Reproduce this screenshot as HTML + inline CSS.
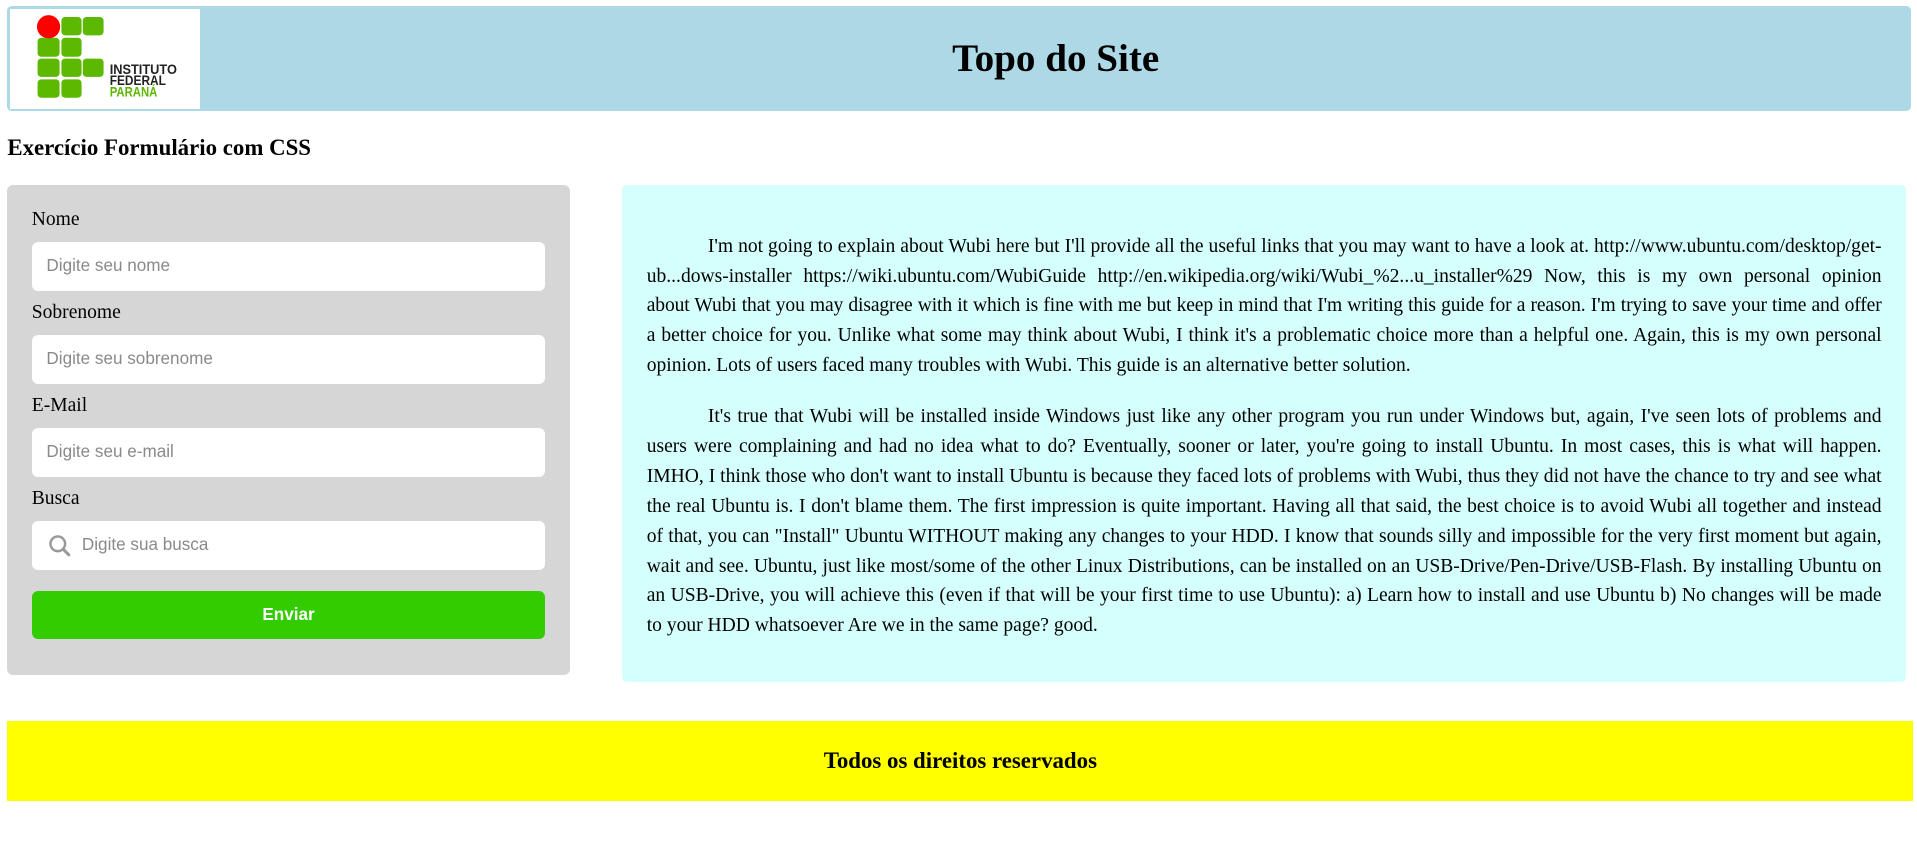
<!DOCTYPE html>
<html><head><meta charset="utf-8">
<style>
html,body{margin:0;padding:0;background:#fff;}
body{zoom:1.2226;width:1568px;height:694px;overflow:hidden;font-family:"Liberation Serif",serif;color:#000;position:relative;}
.header{position:absolute;left:6px;top:5px;width:1557px;height:86px;background:#add8e6;border-radius:4px;}
.logo{position:absolute;left:2px;top:2px;width:156px;height:82px;background:#fff;}
.svg{position:absolute;left:0;top:0;}
.header h1{margin:0;position:absolute;left:158px;right:0;top:24px;text-align:center;font-size:32px;font-weight:bold;line-height:40px;}
h3{position:absolute;left:6px;top:108px;margin:0;font-size:18.7px;line-height:26px;}
.form{position:absolute;left:6px;top:151px;width:460px;height:401px;background:#d6d6d6;border-radius:5px;}
.lbl{position:absolute;left:20px;font-size:16px;line-height:20px;}
.in{position:absolute;left:20px;width:420px;height:40px;background:#fff;border-radius:5px;font-family:"Liberation Sans",Arial,sans-serif;font-size:14px;color:#8a8a8a;line-height:40px;box-sizing:border-box;padding-left:12px;}
.btn{position:absolute;left:20px;top:332px;width:420px;height:40px;background:#33cc00;border-radius:5px;color:#fff;font-family:"Liberation Sans",Arial,sans-serif;font-size:14px;font-weight:bold;text-align:center;line-height:40px;}
.text{position:absolute;left:509px;top:151px;width:1050px;height:407px;background:#d4fffc;border-radius:4px;box-sizing:border-box;padding:21px 20px;}
.p{margin:17.6px 0;font-size:16px;line-height:24.4px;}
.p .ln{display:block;text-align:justify;text-align-last:justify;white-space:nowrap;}
.p .ln.l{text-align-last:left;}
.p .ln.i{padding-left:50px;}
.p .ln.t{letter-spacing:-0.1px;}
.footer{position:absolute;left:6px;top:590px;width:1559px;height:65px;background:#ffff00;text-align:center;font-weight:bold;font-size:18.7px;line-height:65px;}
</style></head><body>
<div class="header">
  <div class="logo"></div>
  <svg class="svg" width="160" height="86" viewBox="0 0 160 86">
    <g fill="#5cb800">
      <rect x="44.5" y="9" width="16.5" height="15" rx="3"/>
      <rect x="62" y="9" width="17" height="15" rx="3"/>
      <rect x="25" y="26" width="18" height="15.5" rx="3"/>
      <rect x="44.5" y="26" width="16.5" height="15.5" rx="3"/>
      <rect x="25" y="43" width="18" height="15" rx="3"/>
      <rect x="44.5" y="43" width="16.5" height="15" rx="3"/>
      <rect x="62" y="43" width="17" height="15" rx="3"/>
      <rect x="25" y="60" width="18" height="15" rx="3"/>
      <rect x="44.5" y="60" width="16.5" height="15" rx="3"/>
    </g>
    <circle cx="34" cy="17" r="9.5" fill="#ff0000"/>
    <g font-family="Liberation Sans, sans-serif" font-weight="bold" font-size="11">
      <text x="84" y="55.5" fill="#222" textLength="55" lengthAdjust="spacingAndGlyphs">INSTITUTO</text>
      <text x="84" y="64.5" fill="#222" textLength="46" lengthAdjust="spacingAndGlyphs">FEDERAL</text>
      <text x="84" y="74" fill="#5cb800" textLength="39" lengthAdjust="spacingAndGlyphs">PARANÁ</text>
    </g>
  </svg>
  <h1>Topo do Site</h1>
</div>
<h3>Exercício Formulário com CSS</h3>
<div class="form">
  <div class="lbl" style="top:19px">Nome</div>
  <div class="in" style="top:47px">Digite seu nome</div>
  <div class="lbl" style="top:95px">Sobrenome</div>
  <div class="in" style="top:123px">Digite seu sobrenome</div>
  <div class="lbl" style="top:171px">E-Mail</div>
  <div class="in" style="top:199px">Digite seu e-mail</div>
  <div class="lbl" style="top:247px">Busca</div>
  <div class="in" style="top:275px;padding-left:41px">
    <svg style="position:absolute;left:13px;top:11px" width="20" height="20" viewBox="0 0 20 20"><circle cx="8" cy="8" r="6" fill="none" stroke="#999" stroke-width="2"/><line x1="12.5" y1="12.5" x2="17" y2="17" stroke="#999" stroke-width="2.5" stroke-linecap="round"/></svg>
    Digite sua busca</div>
  <div class="btn">Enviar</div>
</div>
<div class="text">
<div class="p">
<span class="ln i">I'm not going to explain about Wubi here but I'll provide all the useful links that you may want to have a look at. http://www.ubuntu.com/desktop/get-</span>
<span class="ln">ub...dows-installer https://wiki.ubuntu.com/WubiGuide http://en.wikipedia.org/wiki/Wubi_%2...u_installer%29 Now, this is my own personal opinion</span>
<span class="ln t">about Wubi that you may disagree with it which is fine with me but keep in mind that I'm writing this guide for a reason. I'm trying to save your time and offer</span>
<span class="ln">a better choice for you. Unlike what some may think about Wubi, I think it's a problematic choice more than a helpful one. Again, this is my own personal</span>
<span class="ln l">opinion. Lots of users faced many troubles with Wubi. This guide is an alternative better solution.</span>
</div>
<div class="p">
<span class="ln i">It's true that Wubi will be installed inside Windows just like any other program you run under Windows but, again, I've seen lots of problems and</span>
<span class="ln">users were complaining and had no idea what to do? Eventually, sooner or later, you're going to install Ubuntu. In most cases, this is what will happen.</span>
<span class="ln">IMHO, I think those who don't want to install Ubuntu is because they faced lots of problems with Wubi, thus they did not have the chance to try and see what</span>
<span class="ln">the real Ubuntu is. I don't blame them. The first impression is quite important. Having all that said, the best choice is to avoid Wubi all together and instead</span>
<span class="ln">of that, you can "Install" Ubuntu WITHOUT making any changes to your HDD. I know that sounds silly and impossible for the very first moment but again,</span>
<span class="ln">wait and see. Ubuntu, just like most/some of the other Linux Distributions, can be installed on an USB-Drive/Pen-Drive/USB-Flash. By installing Ubuntu on</span>
<span class="ln">an USB-Drive, you will achieve this (even if that will be your first time to use Ubuntu): a) Learn how to install and use Ubuntu b) No changes will be made</span>
<span class="ln l">to your HDD whatsoever Are we in the same page? good.</span>
</div>
</div>
<div class="footer">Todos os direitos reservados</div>
</body></html>
